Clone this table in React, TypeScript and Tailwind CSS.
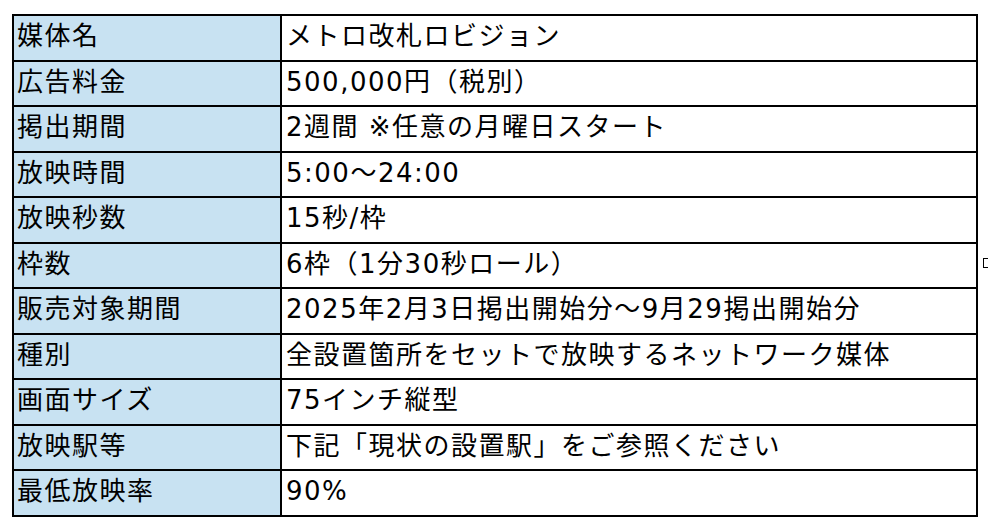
const rows: [string, string][] = [
  ["媒体名", "メトロ改札ロビジョン"],
  ["広告料金", "500,000円（税別）"],
  ["掲出期間", "2週間 ※任意の月曜日スタート"],
  ["放映時間", "5:00～24:00"],
  ["放映秒数", "15秒/枠"],
  ["枠数", "6枠（1分30秒ロール）"],
  ["販売対象期間", "2025年2月3日掲出開始分～9月29掲出開始分"],
  ["種別", "全設置箇所をセットで放映するネットワーク媒体"],
  ["画面サイズ", "75インチ縦型"],
  ["放映駅等", "下記「現状の設置駅」をご参照ください"],
  ["最低放映率", "90%"],
]

export default function App() {
  return (
    <div
      className="relative w-[988px] h-[522px] bg-white text-black pt-[14px] pl-[12px]"
      style={{ fontFamily: '"DejaVu Sans", "Noto Sans CJK JP", sans-serif' }}
    >
      <div className="w-[966px] border-2 border-black flex flex-col">
        {rows.map(([label, value], i) => (
          <div
            key={label}
            className={`flex h-[43.5px] ${i > 0 ? "border-t-2 border-black box-content" : ""}`}
          >
            <div className="w-[268px] shrink-0 bg-[#c8e2f2] border-r-2 border-black pl-[3px] pb-[3px] flex items-center text-[26px] tracking-[1.5px] leading-none whitespace-nowrap">
              {label}
            </div>
            <div className="flex-1 pl-[4px] pb-[3px] flex items-center text-[26px] tracking-[1.5px] leading-none whitespace-nowrap">
              {value}
            </div>
          </div>
        ))}
      </div>
      <span className="absolute left-[983px] top-[258px] w-[7px] h-[10px] border border-black" />
    </div>
  )
}
